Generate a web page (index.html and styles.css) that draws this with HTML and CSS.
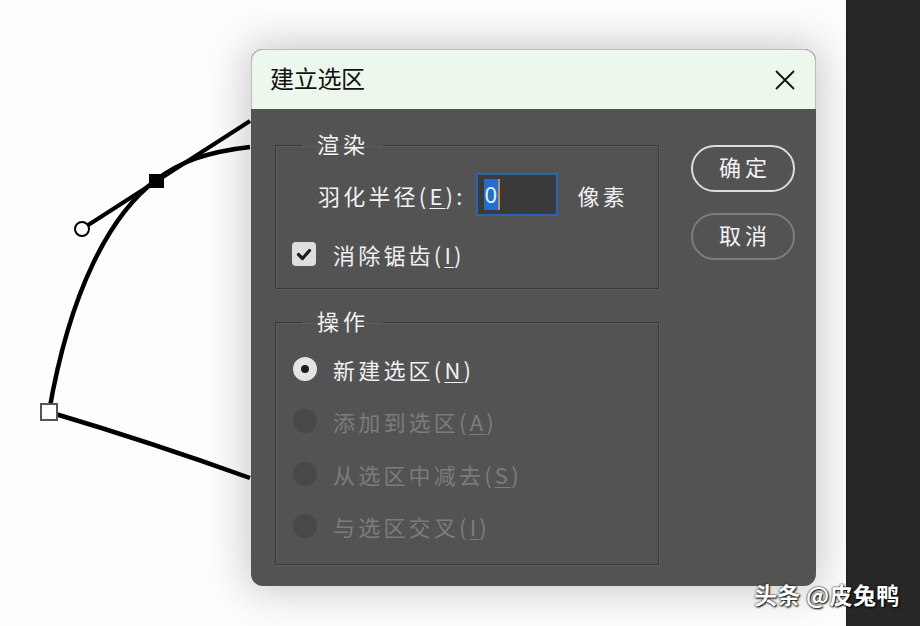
FILE: index.html
```html
<!DOCTYPE html>
<html lang="zh-CN">
<head>
<meta charset="utf-8">
<title>建立选区</title>
<link rel="stylesheet" href="styles.css">
</head>
<body>
<div class="screen">
  <div class="canvas">
    <svg class="paths" width="846" height="626" viewBox="0 0 846 626">
      <path d="M250,121 L82,229" stroke="#000" stroke-width="4" fill="none"/>
      <path d="M250,147 C205,152 178,163 156,180 C110,215 70,290 49,412" stroke="#000" stroke-width="4.5" fill="none"/>
      <path d="M49,412 Q150,442 250,478" stroke="#000" stroke-width="4.5" fill="none"/>
      <rect x="149" y="174" width="15" height="14" fill="#000"/>
      <circle cx="82" cy="229" r="7" fill="#fff" stroke="#000" stroke-width="2"/>
      <rect x="41" y="404" width="16" height="16" fill="#fff" stroke="#555" stroke-width="2"/>
    </svg>
    <div class="dialog">
      <div class="titlebar">
        <span class="title">建立选区</span>
        <svg class="close" width="22" height="22" viewBox="0 0 22 22">
          <path d="M2,2 L20,20 M20,2 L2,20" stroke="#111" stroke-width="1.8" fill="none"/>
        </svg>
      </div>
      <div class="body">
        <div class="groups">
          <fieldset class="group group-render">
            <legend>渲染</legend>
            <div class="feather-row">
              <span class="label">羽化半径(<u>E</u>):</span>
              <span class="input"><span class="sel">0</span><span class="caret"></span></span>
              <span class="label unit">像素</span>
            </div>
            <div class="check-row">
              <span class="checkbox">
                <svg width="24" height="24" viewBox="0 0 24 24"><path d="M6.5,12.5 L10.5,16.5 L17.5,8.5" stroke="#1e1e1e" stroke-width="3.2" fill="none" stroke-linecap="round" stroke-linejoin="round"/></svg>
              </span>
              <span class="label">消除锯齿(<u>I</u>)</span>
            </div>
          </fieldset>
          <fieldset class="group group-op">
            <legend>操作</legend>
            <div class="radio-row">
              <span class="radio on"></span>
              <span class="label">新建选区(<u>N</u>)</span>
            </div>
            <div class="radio-row disabled">
              <span class="radio"></span>
              <span class="label">添加到选区(<u>A</u>)</span>
            </div>
            <div class="radio-row disabled">
              <span class="radio"></span>
              <span class="label">从选区中减去(<u>S</u>)</span>
            </div>
            <div class="radio-row disabled">
              <span class="radio"></span>
              <span class="label">与选区交叉(<u>I</u>)</span>
            </div>
          </fieldset>
        </div>
        <div class="buttons">
          <button class="btn primary">确定</button>
          <button class="btn">取消</button>
        </div>
      </div>
    </div>
  </div>
  <div class="strip"></div>
  <div class="watermark">头条 @皮兔鸭</div>
</div>
</body>
</html>
```
FILE: styles.css
```css
* { box-sizing: border-box; }
html, body { margin: 0; padding: 0; }
body {
  font-family: "Noto Sans CJK SC", "Noto Sans", sans-serif;
  background: #fff;
}
.screen {
  position: relative;
  display: flex;
  width: 920px;
  height: 626px;
  overflow: hidden;
}
.canvas {
  position: relative;
  flex: 0 0 846px;
  height: 626px;
  background: #fdfdfd;
  padding: 49px 0 0 251px;
}
.paths {
  position: absolute;
  left: 0;
  top: 0;
}
.strip {
  flex: 1;
  background: #272727;
  border-left: 1px solid #1c1c1c;
}
.dialog {
  position: relative;
  width: 565px;
  height: 537px;
  background: #535353;
  border-radius: 12px;
  box-shadow: 0 0 40px 6px rgba(0, 0, 0, 0.2);
  overflow: hidden;
}
.titlebar {
  height: 60px;
  display: flex;
  align-items: center;
  justify-content: space-between;
  padding: 0 18px 0 18px;
  background: #ecf8eb;
  border: 1px solid #bcbcbc;
  border-bottom: none;
  border-radius: 12px 12px 0 0;
}
.title {
  font-size: 24px;
  line-height: 30px;
  color: #111;
  letter-spacing: -0.3px;
  padding-bottom: 3px;
}
.close { display: block; margin-right: 1px; }
.body {
  display: flex;
  gap: 32px;
  padding: 21px 21px 0 24px;
}
.groups {
  display: flex;
  flex-direction: column;
  gap: 18px;
  width: 384px;
}
.group {
  margin: 0;
  padding: 0;
  min-width: 0;
  border: 1px solid #3a3a3a;
  box-shadow: 1px 1px 0 #5e5e5e, inset 1px 1px 0 #5c5c5c;
}
legend {
  margin-left: 26px;
  padding: 0 14px 3px 15px;
  font-size: 22px;
  line-height: 27px;
  color: #f2f2f2;
  letter-spacing: 4px;
}
.label {
  font-size: 22px;
  line-height: 30px;
  color: #f0f0f0;
  letter-spacing: 3.2px;
  white-space: nowrap;
}
.label u {
  text-decoration-thickness: 1px;
  text-underline-offset: 3px;
}
.group-render {
  height: 159px;
}
.feather-row {
  display: flex;
  align-items: center;
  padding: 13px 0 0 42px;
}
.input {
  display: flex;
  align-items: center;
  width: 82px;
  height: 43px;
  margin-left: 10px;
  border: 2px solid #2d63ad;
  background: #3a3a3a;
  padding-left: 6px;
}
.sel {
  display: inline-block;
  background: #1f6fd3;
  color: #e8f2ff;
  font-family: "Noto Sans", sans-serif;
  font-size: 22px;
  line-height: 31px;
  padding: 0 1px;
}
.caret {
  display: inline-block;
  width: 2px;
  height: 31px;
  background: #d48a4b;
}
.unit { margin-left: 20px; }
.check-row {
  display: flex;
  align-items: center;
  gap: 17px;
  padding: 23px 0 0 16px;
}
.checkbox {
  width: 24px;
  height: 24px;
  border-radius: 4px;
  background: #dedede;
}
.checkbox svg { display: block; }
.group-op {
  height: 258px;
  padding-top: 17px;
}
.radio-row {
  display: flex;
  align-items: center;
  gap: 16px;
  height: 30px;
  margin-bottom: 22.3px;
  padding-left: 17px;
}
.radio {
  width: 24px;
  height: 24px;
  border-radius: 50%;
  background: #484848;
  position: relative;
}
.radio.on {
  background: #e4e4e4;
}
.radio.on::after {
  content: "";
  position: absolute;
  left: 8px;
  top: 8px;
  width: 8px;
  height: 8px;
  border-radius: 50%;
  background: #1e1e1e;
}
.disabled .label { color: #7c7c7c; }
.buttons {
  display: flex;
  flex-direction: column;
  gap: 21px;
  padding-top: 15px;
}
.btn {
  width: 104px;
  height: 47px;
  border-radius: 24px;
  border: 2px solid #7c7c7c;
  background: #535353;
  color: #f2f2f2;
  font-family: "Noto Sans CJK SC", sans-serif;
  font-size: 22px;
  letter-spacing: 4px;
  padding: 0 0 5px 4px;
  line-height: 1;
}
.btn.primary {
  border-color: #dcdcdc;
}
.watermark {
  position: absolute;
  left: 754px;
  top: 578px;
  font-size: 23px;
  line-height: 32px;
  color: #fff;
  font-weight: 700;
  letter-spacing: 0.3px;
  text-shadow: 1px 1px 2px #000, 0 0 2px #000;
  white-space: nowrap;
}
```
